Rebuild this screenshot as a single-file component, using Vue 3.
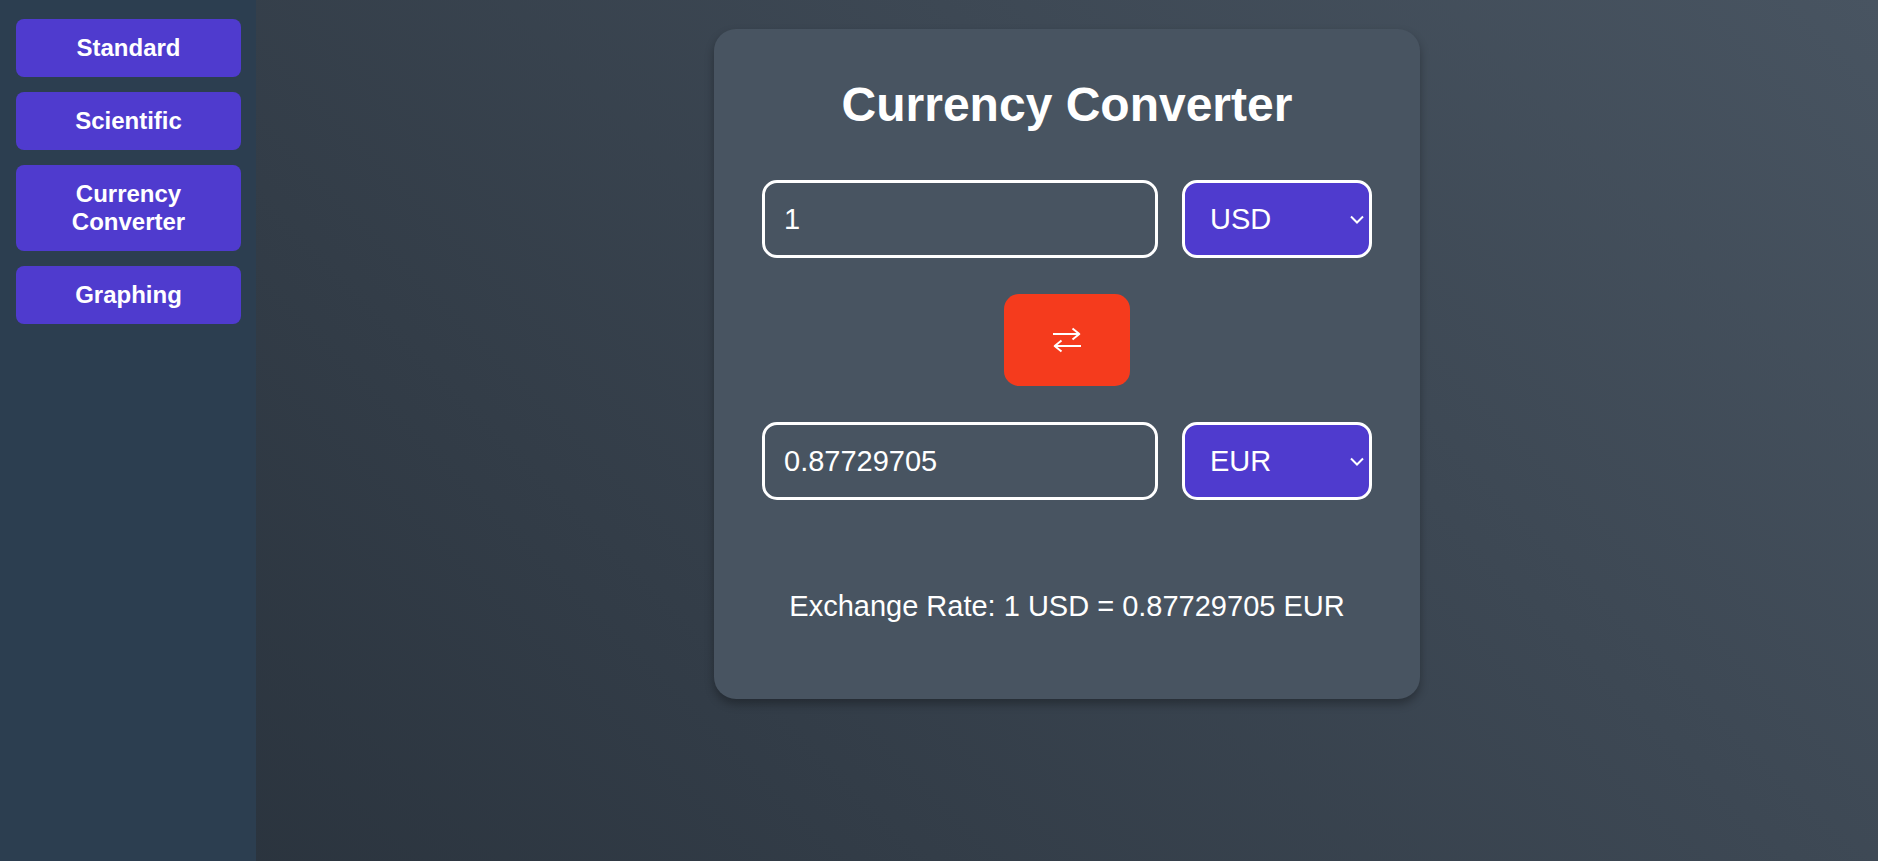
<script setup>
import { computed, ref } from 'vue'

const modes = ['Standard', 'Scientific', 'Currency Converter', 'Graphing']
const currencies = ['USD', 'EUR']
const rates = { USD: 1, EUR: 0.87729705 }

const amount = ref('1')
const from = ref('USD')
const to = ref('EUR')

const format = (n) => String(Number(n.toFixed(8)))
const rate = computed(() => rates[to.value] / rates[from.value])
const result = computed(() => format((Number(amount.value) || 0) * rate.value))

function swap() {
  const previous = from.value
  from.value = to.value
  to.value = previous
}
</script>

<template>
  <div class="layout">
    <nav class="sidebar" aria-label="Calculator modes">
      <button v-for="mode in modes" :key="mode" type="button" class="mode">{{ mode }}</button>
    </nav>
    <main class="content">
      <section class="card">
        <h1 class="title">Currency Converter</h1>
        <div class="row">
          <input v-model="amount" class="amount" type="text" inputmode="decimal" aria-label="Amount" />
          <div class="picker">
            <select v-model="from" class="currency" aria-label="From currency">
              <option v-for="code in currencies" :key="code">{{ code }}</option>
            </select>
            <svg class="chevron" viewBox="0 0 14 10" aria-hidden="true"><path d="M1 1.500L7 7.500L13 1.500" /></svg>
          </div>
        </div>
        <button type="button" class="swap" aria-label="Swap currencies" @click="swap">
          <svg class="swap-icon" viewBox="0 0 28 28" aria-hidden="true">
            <path d="M0 8H26M2 20H28" />
            <path class="head" d="M19.500 2.500L26.300 8L19.500 13.500" />
            <path class="head" d="M8.500 14.500L1.700 20L8.500 25.500" />
          </svg>
        </button>
        <div class="row">
          <input :value="result" class="amount" type="text" readonly aria-label="Converted amount" />
          <div class="picker">
            <select v-model="to" class="currency" aria-label="To currency">
              <option v-for="code in currencies" :key="code">{{ code }}</option>
            </select>
            <svg class="chevron" viewBox="0 0 14 10" aria-hidden="true"><path d="M1 1.500L7 7.500L13 1.500" /></svg>
          </div>
        </div>
        <p class="rate">Exchange Rate: 1 {{ from }} = {{ format(rate) }} {{ to }}</p>
      </section>
    </main>
  </div>
</template>

<style>
body {
  margin: 0;
}
</style>

<style scoped>
.layout {
  display: flex;
  min-height: 100vh;
  box-sizing: border-box;
  font-family: "Liberation Sans", Arial, sans-serif;
  color: #fff;
  background: linear-gradient(45deg, #28313b, #485461);
}
.sidebar {
  display: flex;
  flex-direction: column;
  gap: 15px;
  flex: none;
  width: 256px;
  box-sizing: border-box;
  padding: 19px 15px 19px 16px;
  background: #2c3e50;
}
.mode {
  padding: 15px;
  border: 0;
  border-radius: 8px;
  background: #4f3bce;
  color: #fff;
  font: bold 24px/28px "Liberation Sans", Arial, sans-serif;
  cursor: pointer;
}
.content {
  flex: 1;
  display: flex;
  justify-content: center;
  align-items: flex-start;
  padding: 29px 24px;
}
.card {
  display: flex;
  flex-direction: column;
  align-items: center;
  gap: 36px;
  width: 100%;
  max-width: 706px;
  box-sizing: border-box;
  padding: 48px;
  border-radius: 22px;
  background: #485461;
  box-shadow: 0 5px 10px rgba(0, 0, 0, 0.3);
}
.title {
  margin: 0 0 12px;
  font-size: 48px;
  line-height: 55px;
}
.row {
  display: flex;
  gap: 24px;
  width: 100%;
}
.amount,
.currency {
  box-sizing: border-box;
  height: 78px;
  border: 3px solid #fff;
  border-radius: 15px;
  color: #fff;
  font: 29px/33px "Liberation Sans", Arial, sans-serif;
}
.amount {
  flex: 1;
  min-width: 0;
  padding: 19px;
  background: transparent;
}
.picker {
  position: relative;
  width: 190px;
}
.currency {
  display: block;
  width: 100%;
  padding: 19px 30px 19px 25px;
  background: #4f3bce;
  appearance: none;
}
.chevron {
  position: absolute;
  top: 35px;
  right: 8px;
  width: 14px;
  height: 10px;
  fill: none;
  stroke: #fff;
  stroke-width: 2;
  pointer-events: none;
}
.swap {
  display: flex;
  padding: 32px 49px;
  border: 0;
  border-radius: 15px;
  background: #f53b1d;
  cursor: pointer;
}
.swap-icon {
  width: 28px;
  height: 28px;
  fill: none;
  stroke: #fff;
  stroke-width: 2;
}
.head {
  stroke-linejoin: round;
}
.rate {
  margin: 54px 0 28px;
  font-size: 29px;
  line-height: 33px;
}
</style>
